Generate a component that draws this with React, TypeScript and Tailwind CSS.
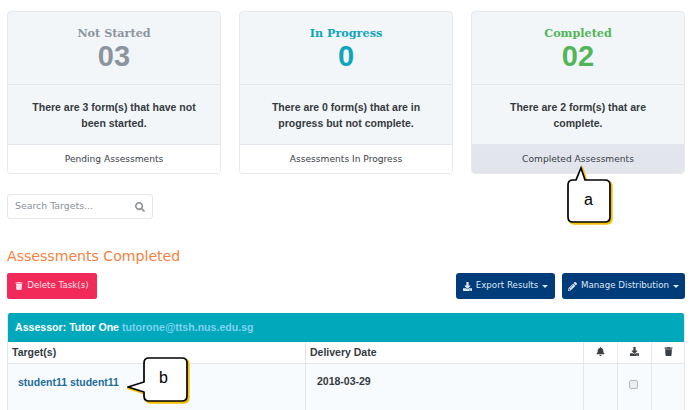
import { FaBell, FaDownload, FaPencilAlt, FaSearch, FaTrash } from "react-icons/fa";

const sans = "font-['Liberation_Sans',Arial,sans-serif]";
const dv = "font-['DejaVu_Sans',Verdana,sans-serif]";

function Card({ title, num, color, text, foot, active }: { title: string; num: string; color: string; text: string[]; foot: string; active?: boolean }) {
  return (
    <div className="flex h-[163px] w-[214px] flex-col overflow-hidden rounded-[4px] border border-[#e6e9ed] bg-[#f3f6f9]">
      <div className="flex h-[73px] flex-col items-center border-b border-[#e3e7ec] pt-[14px]">
        <div className={`font-['DejaVu_Serif',serif] text-[11.2px] leading-[14px] font-bold ${color}`}>{title}</div>
        <div className={`${sans} mt-[1px] text-[29px] leading-[31px] font-bold ${color}`}>{num}</div>
      </div>
      <div className={`${sans} flex h-[60px] flex-col items-center justify-center border-b border-[#e3e7ec] text-[10.5px] leading-[16px] font-bold text-[#333a40]`}>
        {text.map((t) => (
          <div key={t}>{t}</div>
        ))}
      </div>
      <div className={`${dv} flex flex-1 items-center justify-center pt-[1px] text-[9.1px] text-[#3a4046] ${active ? "bg-[#e2e6ec]" : "bg-white"}`}>{foot}</div>
    </div>
  );
}

function Bubble({ label, kind, className }: { label: string; kind: "a" | "b"; className: string }) {
  const d =
    kind === "a"
      ? "M6 15 H9 L14 3 L18 15 H38 Q43 15 43 20 V52 Q43 57 38 57 H6 Q1 57 1 52 V20 Q1 15 6 15 Z"
      : "M22 2 H55 Q60 2 60 7 V40 Q60 45 55 45 H22 Q17 45 17 40 V36 L1 31 L17 26 V7 Q17 2 22 2 Z";
  return (
    <div className={`absolute ${className}`}>
      <svg width={kind === "a" ? 47 : 65} height={kind === "a" ? 62 : 50} className="block">
        <path d={d} fill="none" stroke="#f5c000" strokeWidth="2.4" transform="translate(1.5 1.5)" />
        <path d={d} fill="white" stroke="#000" strokeWidth="1.7" />
      </svg>
      <span className={`${sans} absolute text-[16px] leading-[18px] text-black ${kind === "a" ? "top-[26px] left-[17px]" : "top-[13px] left-[32px]"}`}>{label}</span>
    </div>
  );
}

function BlueBtn({ icon, label, className }: { icon: React.ReactNode; label: string; className: string }) {
  return (
    <div className={`${dv} flex h-[26px] items-center justify-center gap-[4px] rounded-[3px] bg-[#003b7a] text-[8.7px] text-[#dfe8f2] ${className}`}>
      {icon}
      <span>{label}</span>
      <span className="h-0 w-0 border-x-[3px] border-t-[3px] border-x-transparent border-t-[#dfe8f2]" />
    </div>
  );
}

export default function App() {
  return (
    <div className="relative h-[410px] w-[691px] overflow-hidden bg-white">
      <div className="flex flex-col pt-[11px] pr-[6px] pl-[7px]">
        <div className="flex justify-between">
          <Card title="Not Started" num="03" color="text-[#8c959d]" text={["There are 3 form(s) that have not", "been started."]} foot="Pending Assessments" />
          <Card title="In Progress" num="0" color="text-[#0ea5bd]" text={["There are 0 form(s) that are in", "progress but not complete."]} foot="Assessments In Progress" />
          <Card title="Completed" num="02" color="text-[#52b558]" text={["There are 2 form(s) that are", "complete."]} foot="Completed Assessments" active />
        </div>

        <div className="mt-[20px] flex h-[25px] w-[146px] items-center justify-between rounded-[3px] border border-[#e3e6ea] pr-[7px] pl-[7px]">
          <span className={`${dv} text-[9.4px] text-[#8b9197]`}>Search Targets...</span>
          <FaSearch className="text-[10px] text-[#8a8f94]" />
        </div>

        <h2 className={`${dv} mt-[27px] text-[14.1px] leading-[20px] font-normal text-[#f58140]`}>Assessments Completed</h2>

        <div className="mt-[7px] flex items-center justify-between">
          <div className={`${dv} flex h-[26px] w-[90px] items-center justify-center gap-[4px] rounded-[2px] bg-[#f22a5a] text-[8.7px] text-[#fde3ea]`}>
            <FaTrash className="text-[8px]" />
            <span>Delete Task(s)</span>
          </div>
          <div className="flex gap-[7px]">
            <BlueBtn className="w-[99px]" icon={<FaDownload className="text-[9px]" />} label="Export Results" />
            <BlueBtn className="w-[123px]" icon={<FaPencilAlt className="text-[9px]" />} label="Manage Distribution" />
          </div>
        </div>

        <div className="mt-[14px] overflow-hidden rounded-t-[3px] border-x border-[#e3e7ec]">
          <div className={`${sans} flex h-[29px] items-center bg-[#00a8bb] pl-[7px] text-[10.6px] font-bold text-white`}>
            <span>Assessor: Tutor One</span>
            <span className="ml-[3px] text-[#7fd3f0]">tutorone@ttsh.nus.edu.sg</span>
          </div>
          <div className={`${sans} flex h-[22px] items-center border-b border-[#e3e7ec] text-[10.5px] font-bold text-[#333a40]`}>
            <div className="flex h-full w-[298px] items-center border-r border-[#e3e7ec] pt-[1px] pl-[4px]">Target(s)</div>
            <div className="flex h-full w-[278px] items-center border-r border-[#e3e7ec] pt-[1px] pl-[4px]">Delivery Date</div>
            <div className="flex h-full w-[34px] items-center justify-center border-r border-[#e3e7ec] pb-[2px]"><FaBell className="text-[9px] text-[#3a3f44]" /></div>
            <div className="flex h-full w-[34px] items-center justify-center border-r border-[#e3e7ec] pb-[2px]"><FaDownload className="text-[9px] text-[#3a3f44]" /></div>
            <div className="flex h-full flex-1 items-center justify-center pb-[2px]"><FaTrash className="text-[9px] text-[#3a3f44]" /></div>
          </div>
          <div className={`${sans} flex h-[46px] bg-[#f8fbfe] text-[10.5px] font-bold`}>
            <div className="h-full w-[298px] border-r border-[#e3e7ec] pt-[11px] pl-[10px] text-[#1d6d99]">student11 student11</div>
            <div className="h-full w-[278px] border-r border-[#e3e7ec] pt-[10px] pl-[11px] text-[#333a40]">2018-03-29</div>
            <div className="h-full w-[34px] border-r border-[#e3e7ec]" />
            <div className="flex h-full w-[34px] justify-center border-r border-[#e3e7ec] pt-[16px]">
              <div className="mr-[2px] h-[9px] w-[9px] rounded-[2px] border border-[#b5b8bb] bg-[#eceef0]" />
            </div>
            <div className="flex-1" />
          </div>
        </div>
      </div>

      <Bubble label="a" kind="a" className="top-[165px] left-[567px]" />
      <Bubble label="b" kind="b" className="top-[356px] left-[127px]" />
    </div>
  );
}
